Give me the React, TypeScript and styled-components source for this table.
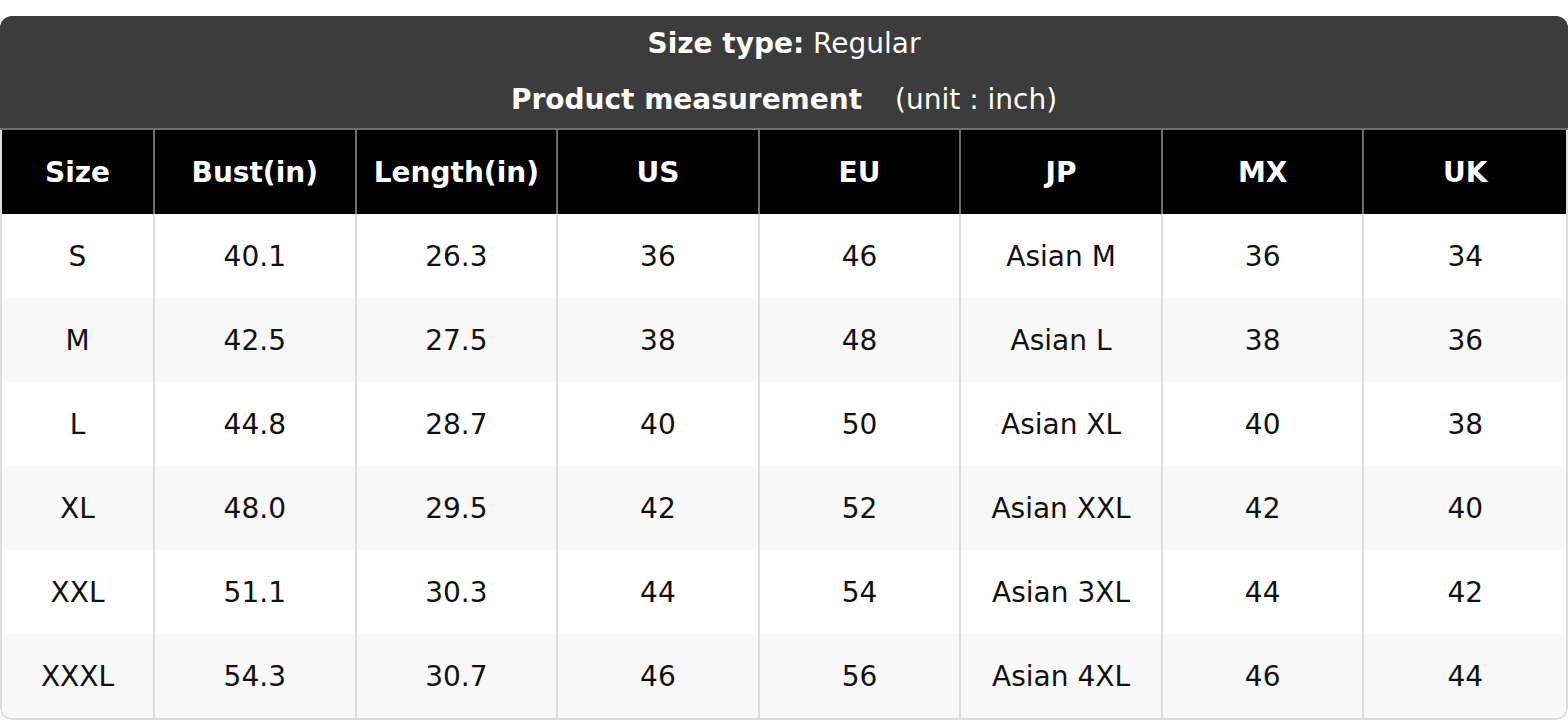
import React from "react";
import styled, { createGlobalStyle } from "styled-components";

const GlobalStyle = createGlobalStyle`
  html, body { margin: 0; padding: 0; background: #ffffff; }
  body { font-family: "DejaVu Sans", Verdana, sans-serif; }
`;

const Page = styled.div`
  padding-top: 16px;
  width: 1568px;
`;

const Card = styled.div`
  width: 1568px;
  border-radius: 12px;
  overflow: hidden;
  background: #ffffff;
`;

const Banner = styled.div`
  background: #3c3c3c;
  color: #ffffff;
  padding: 7px 0 7px;
  text-align: center;
  font-size: 28px;
  border-bottom: 2px solid #6e6e6e;
`;

const BannerLine = styled.div<{ $gap?: number }>`
  line-height: 42px;
  margin-top: ${(p) => p.$gap ?? 0}px;
  white-space: pre;
`;

const Strong = styled.span`
  font-weight: bold;
`;

const Unit = styled.span`
  margin-left: 33px;
`;

const Grid = styled.div`
  display: grid;
  grid-template-columns: 153px repeat(7, 1fr);
  border-left: 2px solid #dddddd;
  border-right: 2px solid #dddddd;
  border-bottom: 2px solid #dddddd;
  border-bottom-left-radius: 12px;
  border-bottom-right-radius: 12px;
  overflow: hidden;
`;

const HeadCell = styled.div<{ $last?: boolean }>`
  background: #000000;
  color: #ffffff;
  font-weight: bold;
  font-size: 28px;
  height: 84px;
  display: flex;
  align-items: center;
  justify-content: center;
  border-right: ${(p) => (p.$last ? "none" : "2px solid #6e6e6e")};
`;

const Cell = styled.div<{ $alt: boolean; $last?: boolean }>`
  background: ${(p) => (p.$alt ? "#f8f8f8" : "#ffffff")};
  color: #111111;
  font-size: 28px;
  height: 84px;
  display: flex;
  align-items: center;
  justify-content: center;
  border-right: ${(p) => (p.$last ? "none" : "2px solid #dddddd")};
`;

const headers = ["Size", "Bust(in)", "Length(in)", "US", "EU", "JP", "MX", "UK"];

const rows: string[][] = [
  ["S", "40.1", "26.3", "36", "46", "Asian M", "36", "34"],
  ["M", "42.5", "27.5", "38", "48", "Asian L", "38", "36"],
  ["L", "44.8", "28.7", "40", "50", "Asian XL", "40", "38"],
  ["XL", "48.0", "29.5", "42", "52", "Asian XXL", "42", "40"],
  ["XXL", "51.1", "30.3", "44", "54", "Asian 3XL", "44", "42"],
  ["XXXL", "54.3", "30.7", "46", "56", "Asian 4XL", "46", "44"],
];

export default function App() {
  return (
    <Page>
      <GlobalStyle />
      <Card>
        <Banner>
          <BannerLine>
            <Strong>Size type:</Strong> Regular
          </BannerLine>
          <BannerLine $gap={14}>
            <Strong>Product measurement</Strong>
            <Unit>(unit : inch)</Unit>
          </BannerLine>
        </Banner>
        <Grid>
          {headers.map((h, i) => (
            <HeadCell key={h} $last={i === headers.length - 1}>
              {h}
            </HeadCell>
          ))}
          {rows.map((r, ri) =>
            r.map((v, ci) => (
              <Cell key={`${ri}-${ci}`} $alt={ri % 2 === 1} $last={ci === r.length - 1}>
                {v}
              </Cell>
            ))
          )}
        </Grid>
      </Card>
    </Page>
  );
}
